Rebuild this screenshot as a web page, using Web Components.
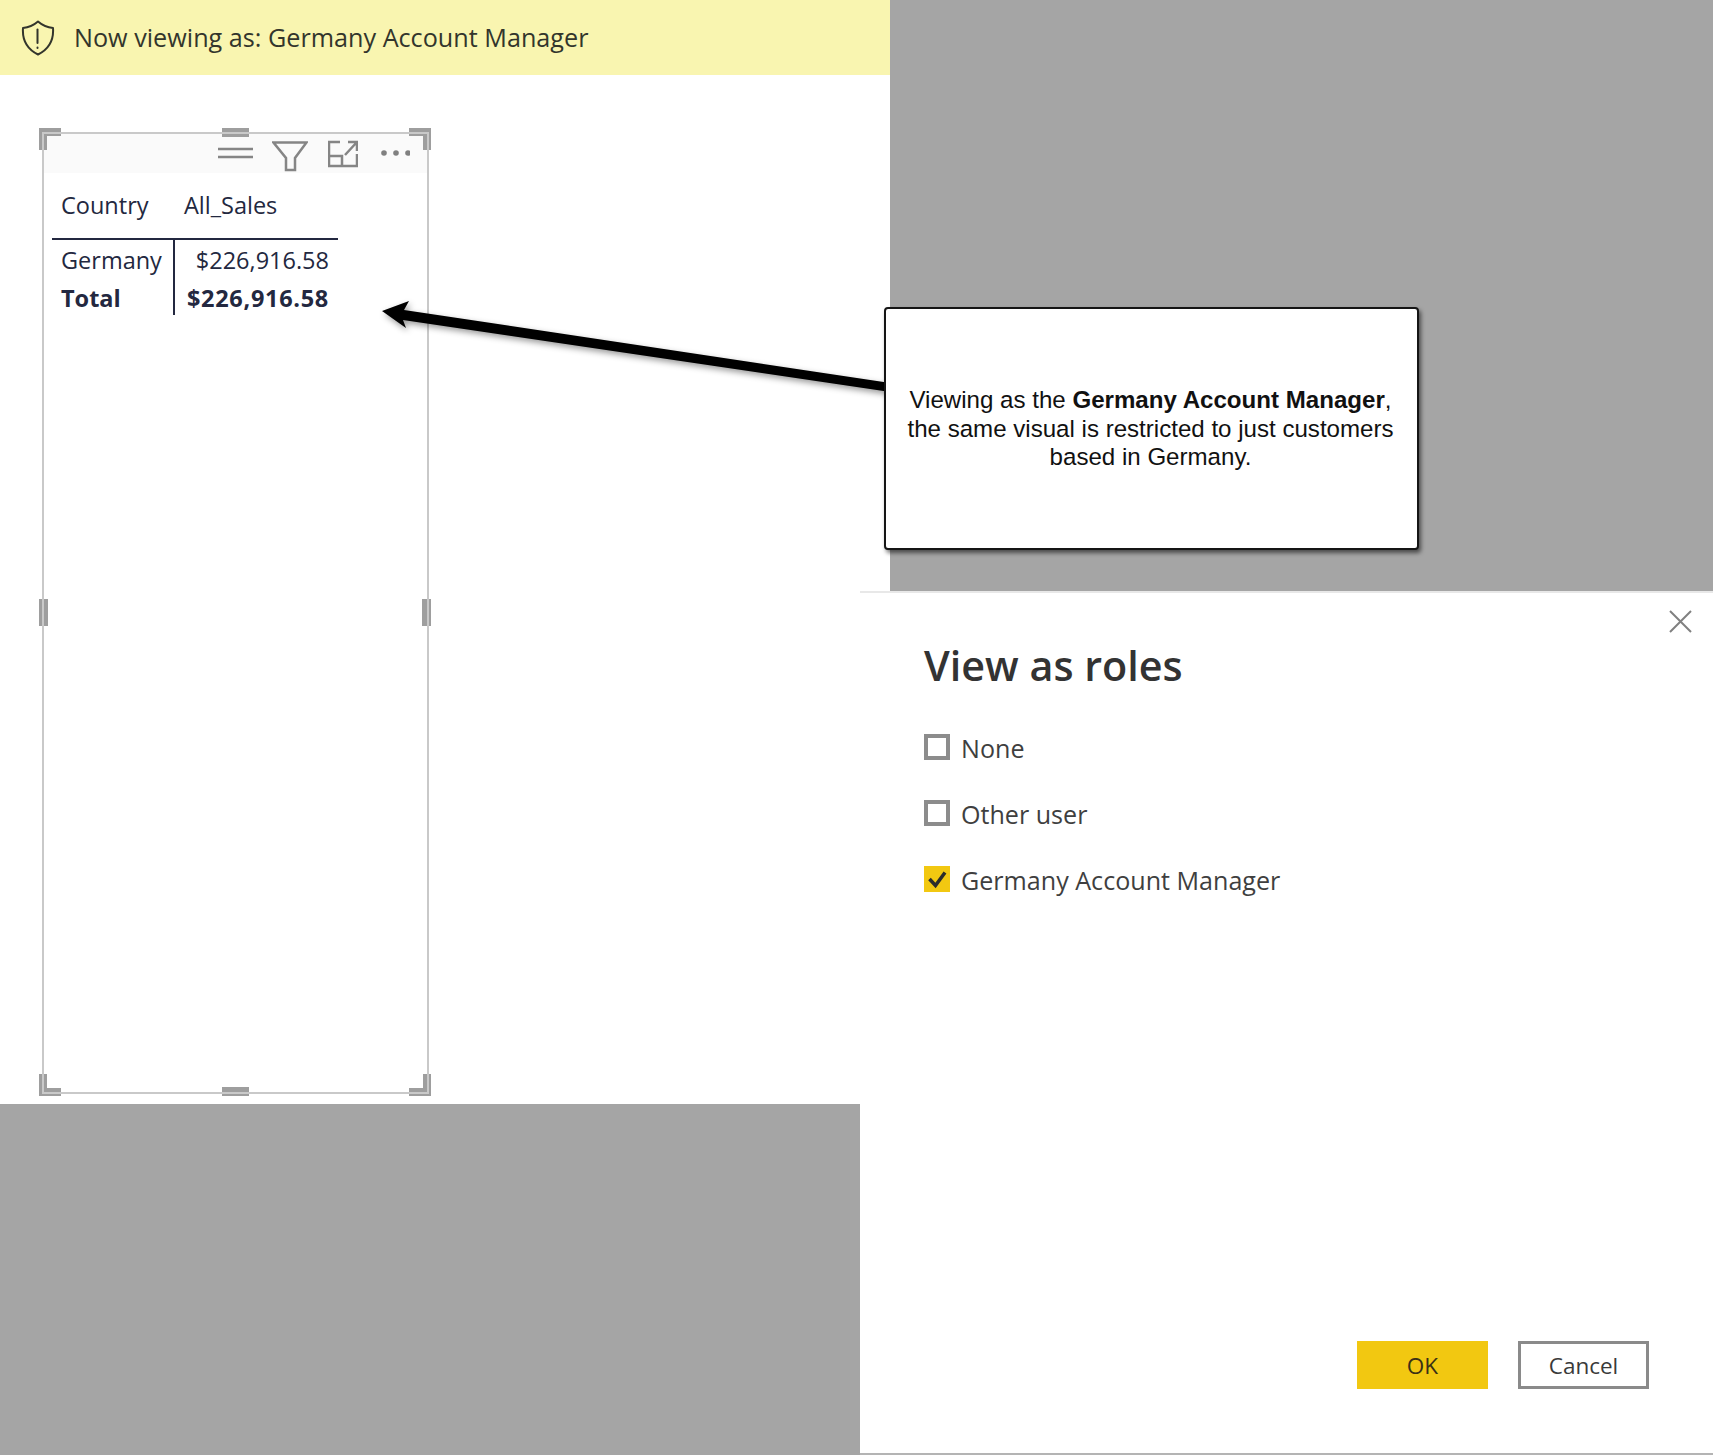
<!DOCTYPE html>
<html lang="en">
<head>
<meta charset="utf-8">
<title>View as roles</title>
<style>
  html, body { margin: 0; padding: 0; background: #fff; }
  body { width: 1713px; height: 1455px; overflow: hidden; font-family: "Open Sans", "Noto Sans", sans-serif; }
</style>
</head>
<body>
<report-page>
  <view-banner slot="banner">Now viewing as: Germany Account Manager</view-banner>
  <dim-area slot="dim-top"></dim-area>
  <report-visual slot="visual">
    <sales-table></sales-table>
  </report-visual>
  <roles-dialog slot="dialog" heading="View as roles">
    <role-option>None</role-option>
    <role-option>Other user</role-option>
    <role-option checked>Germany Account Manager</role-option>
    <dialog-button slot="actions" primary>OK</dialog-button>
    <dialog-button slot="actions">Cancel</dialog-button>
  </roles-dialog>
  <dim-area slot="dim-bottom"></dim-area>
  <callout-arrow slot="over"></callout-arrow>
  <callout-note slot="over">Viewing as the <b>Germany Account Manager</b>,<br>the same visual is restricted to just customers<br>based in Germany.</callout-note>
</report-page>

<script>
// helper: every component gets an open shadow root from a html string
class ShadowBase extends HTMLElement {
  constructor() {
    super();
    this.attachShadow({ mode: 'open' }).innerHTML = this.constructor.markup;
  }
}

class ReportPage extends ShadowBase {
  static markup = `
    <style>
      :host { display: grid; position: relative; width: 1713px; height: 1455px;
        grid-template-columns: 860px 30px 823px;
        grid-template-rows: 75px 516px 513px 351px; }
      .banner { grid-column: 1 / 3; grid-row: 1; display: grid; }
      .dim-top { grid-column: 3; grid-row: 1 / 3; display: grid; }
      .visual { grid-column: 1; grid-row: 2 / 4; display: block; padding: 57px 0 0 42px; }
      .dialog { grid-column: 2 / 4; grid-row: 3 / 5; display: grid; }
      .dim-bottom { grid-column: 1; grid-row: 4; display: grid; }
    </style>
    <div class="banner"><slot name="banner"></slot></div>
    <div class="dim-top"><slot name="dim-top"></slot></div>
    <div class="visual"><slot name="visual"></slot></div>
    <div class="dialog"><slot name="dialog"></slot></div>
    <div class="dim-bottom"><slot name="dim-bottom"></slot></div>
    <slot name="over"></slot>`;
}

class DimArea extends ShadowBase {
  static markup = `<style>:host { display: block; background: #a5a5a5; }</style>`;
}

class ViewBanner extends ShadowBase {
  static markup = `
    <style>
      :host { display: flex; align-items: center; gap: 19px; padding-left: 21px;
        background: #f9f5b0; color: #33352c; font-size: 25.2px; }
      svg { flex: none; }
      span { padding-bottom: 2px; }
    </style>
    <svg width="34" height="36" viewBox="0 0 34 36" fill="none" stroke="#33352c" stroke-width="2" stroke-linecap="round" stroke-linejoin="round">
      <path d="M17 1.5C13 5 7.5 7.5 2 8C1.2 19 5 28.5 17 34.5C29 28.5 32.800 19 32 8C26.500 7.500 21 5 17 1.500Z"/>
      <path d="M16.500 9.500V23"/>
      <path d="M16.500 27.500V28"/>
    </svg>
    <span><slot></slot></span>`;
}

class ReportVisual extends ShadowBase {
  static markup = `
    <style>
      :host { display: block; position: relative; box-sizing: border-box; width: 387px; height: 962px;
        border: 2px solid #c9c9c9; }
      .toolbar { display: flex; justify-content: flex-end; height: 39px; padding-right: 17px; background: #fafafa; }
      .toolbar svg { flex: none; height: 39px; fill: none; stroke: #858585; stroke-width: 2.500; }
      .hamburger { width: 36px; margin-right: 19px; }
      .funnel { width: 36px; margin-right: 20px; }
      .expand { width: 30px; margin-right: 22px; }
      .dots { width: 30px; }
      .handle { position: absolute; background: #9e9e9e; }
      .n, .s { width: 27px; height: 9px; left: 178px; }
      .n { top: -6px; } .s { bottom: -4px; }
      .w, .e { width: 9px; height: 27px; top: 465px; }
      .w { left: -5px; } .e { right: -4px; }
      .corner { position: absolute; width: 22px; height: 22px; box-sizing: border-box; border: 0 solid #9e9e9e; }
      .tl { left: -5px; top: -6px; border-width: 8px 0 0 8px; }
      .tr { right: -4px; top: -6px; border-width: 8px 8px 0 0; }
      .bl { left: -5px; bottom: -4px; border-width: 0 0 8px 8px; }
      .br { right: -4px; bottom: -4px; border-width: 0 8px 8px 0; }
      /* the frame line runs over the handles */
      .frame { position: absolute; inset: -2px; border: 2px solid #c9c9c9; pointer-events: none; }
    </style>
    <div class="toolbar">
      <svg class="hamburger" viewBox="0 0 36 39"><path d="M1 15H36M1 23H36"/></svg>
      <svg class="funnel" viewBox="0 0 36 39"><path d="M1.500 8.500H34.500L23 24V36H14V24Z"/></svg>
      <svg class="expand" viewBox="0 0 30 39"><path d="M12 8H1V32H29V20M1 22H14V32M17 21L29 8M20 8H29V17"/></svg>
      <svg class="dots" viewBox="0 0 30 39" style="stroke:none;fill:#808080"><circle cx="4" cy="19" r="2.800"/><circle cx="16" cy="19" r="2.800"/><circle cx="28" cy="19" r="2.800"/></svg>
    </div>
    <slot></slot>
    <i class="handle n"></i><i class="handle s"></i><i class="handle w"></i><i class="handle e"></i>
    <i class="corner tl"></i><i class="corner tr"></i><i class="corner bl"></i><i class="corner br"></i>
    <i class="frame"></i>`;
}

class SalesTable extends ShadowBase {
  static markup = `
    <style>
      :host { display: grid; width: 286px; margin-left: 8px; color: #232840; font-size: 23.500px;
        grid-template-columns: 121px 165px; grid-template-rows: 65px 2px 2px 38px 35px; line-height: 36px; white-space: nowrap; }
      .head { display: flex; align-items: center; padding: 0 0 2px 9px; }
      .head + .head { padding-left: 11px; }
      .rule { grid-column: 1 / 3; background: #232840; }
      .pad { grid-column: 1; }
      .pad2 { grid-column: 2; border-left: 2px solid #232840; }
      .name { padding-left: 9px; grid-column: 1; }
      .val { grid-column: 2; text-align: right; padding-right: 9px; border-left: 2px solid #232840; }
      .total { font-weight: 700; }
      .val.total { letter-spacing: .7px; }
    </style>
    <div class="head">Country</div><div class="head">All_Sales</div>
    <div class="rule"></div>
    <div class="pad"></div><div class="pad2"></div>
    <div class="name">Germany</div><div class="val">$226,916.58</div>
    <div class="name total">Total</div><div class="val total">$226,916.58</div>`;
}

class RolesDialog extends ShadowBase {
  static markup = `
    <style>
      :host { display: flex; flex-direction: column; background: #fff; color: #3a3a3a;
        border-top: 2px solid #e8e8e8; border-bottom: 2px solid #b4b4b4; }
      .close { align-self: flex-end; margin: 17px 21px 0 0; width: 23px; height: 23px; fill: none; stroke: #808080; stroke-width: 2; }
      h1 { margin: 7px 64px 44px; font-size: 41.300px; line-height: 50px; font-weight: 600; color: #333; }
      .options { display: flex; flex-direction: column; gap: 40px; padding: 0 64px; }
      .actions { margin-top: auto; display: flex; justify-content: flex-end; gap: 30px; padding: 0 64px 64px 0; }
    </style>
    <svg class="close" viewBox="0 0 23 23"><path d="M1 1L22 22M22 1L1 22"/></svg>
    <h1></h1>
    <div class="options"><slot></slot></div>
    <div class="actions"><slot name="actions"></slot></div>`;

  connectedCallback() {
    this.shadowRoot.querySelector('h1').textContent = this.getAttribute('heading');
  }
}

class RoleOption extends ShadowBase {
  static markup = `
    <style>
      :host { display: flex; align-items: center; gap: 11px; height: 26px; font-size: 25.100px; color: #3f3f3f; white-space: nowrap; }
      .box { flex: none; box-sizing: border-box; width: 26px; height: 26px; border: 4px solid #8c8c8c; background: #fff; }
      .box svg { display: none; }
      .label { padding-top: 2px; }
      :host([checked]) .box { border: 0; background: #f2c811; }
      :host([checked]) .box svg { display: block; }
    </style>
    <span class="box"><svg width="26" height="26" viewBox="0 0 26 26" fill="none" stroke="#2b2b2b" stroke-width="3.500"><path d="M5.500 13L11.500 19.500L21 6.500"/></svg></span>
    <span class="label"><slot></slot></span>`;
}

class DialogButton extends ShadowBase {
  static markup = `
    <style>
      :host { display: flex; align-items: center; justify-content: center; box-sizing: border-box;
        width: 131px; height: 48px; font-size: 22.500px; color: #3a3a3a; border: 3px solid #8a8a8a; background: #fff; }
      :host([primary]) { border: 0; background: #f2c811; color: #3a3016; }
    </style>
    <slot></slot>`;
}

class CalloutArrow extends ShadowBase {
  static markup = `
    <style>
      :host { display: block; position: absolute; left: 380px; top: 298px; width: 510px; height: 100px; }
      svg { display: block; overflow: visible; filter: drop-shadow(2px 3px 3px rgba(0,0,0,.4)); }
    </style>
    <svg width="510" height="100" viewBox="380 298 510 100"><polygon points="382,311 409,301 404,310 887,382.500 887,391.500 403,320 406,328" fill="#000"/></svg>`;
}

class CalloutNote extends ShadowBase {
  static markup = `
    <style>
      :host { display: flex; align-items: center; justify-content: center; position: absolute; box-sizing: border-box;
        left: 884px; top: 307px; width: 535px; height: 243px; background: #fff; border: 2px solid #151515; border-radius: 4px;
        box-shadow: 2px 3px 4px rgba(0,0,0,.55); font-family: "Liberation Sans", Arial, sans-serif;
        font-size: 24.100px; line-height: 28.600px; text-align: center; color: #111; white-space: nowrap; }
      div { padding: 1px 2px 0 0; }
    </style>
    <div><slot></slot></div>`;
}

customElements.define('report-page', ReportPage);
customElements.define('dim-area', DimArea);
customElements.define('view-banner', ViewBanner);
customElements.define('report-visual', ReportVisual);
customElements.define('sales-table', SalesTable);
customElements.define('roles-dialog', RolesDialog);
customElements.define('role-option', RoleOption);
customElements.define('dialog-button', DialogButton);
customElements.define('callout-arrow', CalloutArrow);
customElements.define('callout-note', CalloutNote);
</script>
</body>
</html>
